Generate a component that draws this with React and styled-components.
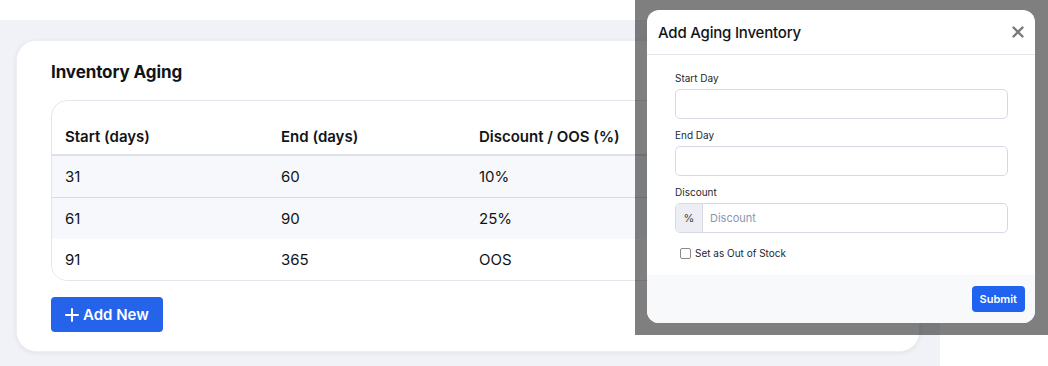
import React from "react";
import styled, { createGlobalStyle } from "styled-components";

const ROWS = [
  { start: 31, end: 60, discount: "10%", shaded: true },
  { start: 61, end: 90, discount: "25%", shaded: true },
  { start: 91, end: 365, discount: "OOS", shaded: false },
];

const FIELDS = ["Start Day", "End Day"];

const GlobalStyle = createGlobalStyle`
  html, body {
    margin: 0;
    padding: 0;
    background: #ffffff;
    font-family: Inter, "Noto Sans", "Liberation Sans", sans-serif;
    color: #111418;
  }
`;

const Screen = styled.div`
  position: relative;
  width: 1048px;
  height: 366px;
  overflow: hidden;
  padding-top: 20px;
  box-sizing: border-box;
`;

const PageBg = styled.div`
  width: 940px;
  height: 346px;
  background: #f1f2f7;
  padding: 20px 20px 0 16px;
  box-sizing: border-box;
`;

const Card = styled.div`
  width: 904px;
  height: 312px;
  background: #ffffff;
  border-radius: 20px;
  box-shadow: 0 1px 4px rgba(30, 40, 80, 0.08);
  border: 1px solid #eceef3;
  box-sizing: border-box;
  padding: 19px 34px 0;
`;

const Title = styled.h2`
  margin: 0 0 16px;
  font-size: 17px;
  line-height: 24px;
  font-weight: 700;
  letter-spacing: -0.1px;
`;

const TableWrap = styled.div`
  border: 1px solid #e4e6ed;
  border-radius: 16px;
  overflow: hidden;
`;

const Table = styled.table`
  width: 100%;
  border-collapse: collapse;
  font-size: 15px;
`;

const Th = styled.th`
  text-align: left;
  font-weight: 600;
  height: 54px;
  padding: 0 13px 8px;
  box-sizing: border-box;
  vertical-align: bottom;
  border-bottom: 2px solid #dfe1e9;
  width: ${(p) => p.width || "auto"};
`;

const Tr = styled.tr`
  background: ${(p) => (p.shaded ? "#f7f8fb" : "#ffffff")};
  & + & td {
    border-top: 1px solid #d8dbe5;
  }
`;

const Td = styled.td`
  height: 41px;
  padding: 0 13px;
  vertical-align: middle;
`;

const AddButton = styled.button`
  margin-top: 16px;
  display: inline-flex;
  align-items: center;
  gap: 4px;
  height: 35px;
  padding: 0 14px 0 14px;
  border: none;
  border-radius: 4px;
  background: #2563eb;
  color: #ffffff;
  font-family: inherit;
  font-size: 15px;
  font-weight: 600;
`;

const Backdrop = styled.div`
  position: absolute;
  top: 0;
  left: 635px;
  width: 413px;
  height: 335px;
  background: rgba(0, 0, 0, 0.5);
`;

const Modal = styled.div`
  position: absolute;
  top: 10px;
  left: 12px;
  width: 388px;
  height: 313px;
  background: #ffffff;
  border-radius: 12px;
  overflow: hidden;
  display: flex;
  flex-direction: column;
`;

const ModalHeader = styled.div`
  height: 45px;
  flex: none;
  display: flex;
  align-items: center;
  justify-content: space-between;
  padding: 0 10px 0 11px;
  border-bottom: 1px solid #e2e4eb;
  box-sizing: border-box;
`;

const ModalTitle = styled.div`
  font-size: 15px;
  font-weight: 500;
  letter-spacing: -0.2px;
`;

const Close = styled.div`
  width: 14px;
  height: 14px;
  display: flex;
  align-items: center;
  justify-content: center;
`;

const ModalBody = styled.div`
  flex: 1;
  padding: 16px 27px 0 28px;
`;

const Field = styled.div`
  margin-bottom: 9px;
`;

const Label = styled.div`
  font-size: 10px;
  line-height: 14px;
  color: #25282e;
  margin-bottom: 4px;
`;

const Input = styled.div`
  height: 30px;
  border: 1px solid #d6d9e4;
  border-radius: 5px;
  box-sizing: border-box;
  display: flex;
  overflow: hidden;
`;

const Addon = styled.div`
  width: 26px;
  background: #eceef3;
  border-right: 1px solid #d6d9e4;
  display: flex;
  align-items: center;
  justify-content: center;
  font-size: 11px;
  color: #444;
`;

const Placeholder = styled.div`
  display: flex;
  align-items: center;
  padding-left: 7px;
  font-size: 11px;
  color: #8e95b2;
`;

const CheckRow = styled.label`
  display: flex;
  align-items: center;
  gap: 4px;
  margin-top: 13px;
  padding-left: 5px;
  font-size: 10px;
  line-height: 14px;
  color: #25282e;
`;

const Check = styled.span`
  width: 9px;
  height: 9px;
  border: 1px solid #8a8a8a;
  border-radius: 2px;
  background: #fff;
`;

const ModalFooter = styled.div`
  height: 48px;
  flex: none;
  box-sizing: border-box;
  background: #f8f9fb;
  display: flex;
  align-items: center;
  justify-content: flex-end;
  padding: 0 10px 0;
`;

const Submit = styled.button`
  height: 26px;
  padding: 0 8px;
  border: none;
  border-radius: 4px;
  background: #1f63f0;
  color: #fff;
  font-family: inherit;
  font-size: 11px;
  font-weight: 600;
`;

const PlusIcon = () => (
  <svg width="14" height="14" viewBox="0 0 14 14">
    <path d="M7 1v12M1 7h12" stroke="#fff" strokeWidth="2" strokeLinecap="round" />
  </svg>
);

const CloseIcon = () => (
  <svg width="12" height="12" viewBox="0 0 12 12">
    <path d="M1.5 1.5l9 9M10.5 1.5l-9 9" stroke="#7a7a7a" strokeWidth="2.4" strokeLinecap="round" />
  </svg>
);

const App = () => {
  return (
    <Screen>
      <GlobalStyle />
      <PageBg>
        <Card>
          <Title>Inventory Aging</Title>
          <TableWrap>
            <Table>
              <thead>
                <tr>
                  <Th width="216px">Start (days)</Th>
                  <Th width="198px">End (days)</Th>
                  <Th>Discount / OOS (%)</Th>
                </tr>
              </thead>
              <tbody>
                {ROWS.map((row) => (
                  <Tr key={row.start} shaded={row.shaded}>
                    <Td>{row.start}</Td>
                    <Td>{row.end}</Td>
                    <Td>{row.discount}</Td>
                  </Tr>
                ))}
              </tbody>
            </Table>
          </TableWrap>
          <AddButton>
            <PlusIcon />
            Add New
          </AddButton>
        </Card>
      </PageBg>

      <Backdrop>
        <Modal>
          <ModalHeader>
            <ModalTitle>Add Aging Inventory</ModalTitle>
            <Close>
              <CloseIcon />
            </Close>
          </ModalHeader>
          <ModalBody>
            {FIELDS.map((f) => (
              <Field key={f}>
                <Label>{f}</Label>
                <Input />
              </Field>
            ))}
            <Field>
              <Label>Discount</Label>
              <Input>
                <Addon>%</Addon>
                <Placeholder>Discount</Placeholder>
              </Input>
            </Field>
            <CheckRow>
              <Check />
              Set as Out of Stock
            </CheckRow>
          </ModalBody>
          <ModalFooter>
            <Submit>Submit</Submit>
          </ModalFooter>
        </Modal>
      </Backdrop>
    </Screen>
  );
};

export default App;
